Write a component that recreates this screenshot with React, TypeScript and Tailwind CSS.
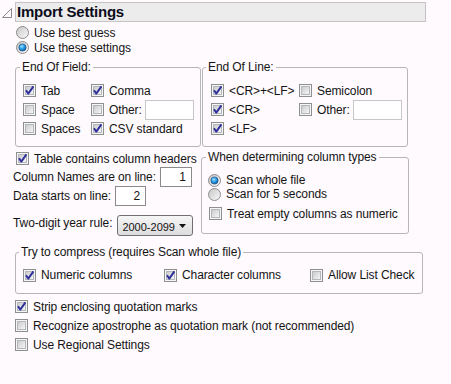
import React from "react";

const CheckBox = ({ on }: { on?: boolean }) => (
  <svg width="13" height="13" viewBox="0 0 13 13" className="shrink-0">
    <defs>
      <linearGradient id="cb-fill" x1="0" y1="0" x2="1" y2="1">
        <stop offset="0" stopColor="#c9c9c9" />
        <stop offset="1" stopColor="#f8f8f8" />
      </linearGradient>
    </defs>
    <rect x="0.5" y="0.5" width="12" height="12" fill="#f5f5f5" stroke="#8e8f8f" />
    <rect x="2.5" y="2.5" width="8" height="8" fill="url(#cb-fill)" stroke="#b4b7bb" />
    {on && (
      <path
        d="M3 6.2 L5.3 9.6 L10.4 2.4"
        fill="none"
        stroke="#2e2e9c"
        strokeWidth="1.9"
        strokeLinejoin="round"
      />
    )}
  </svg>
);

const Radio = ({ on }: { on?: boolean }) => (
  <svg width="13" height="13" viewBox="0 0 13 13" className="shrink-0">
    <defs>
      <linearGradient id="rb-fill" x1="0" y1="0" x2="1" y2="1">
        <stop offset="0" stopColor="#c4c4c4" />
        <stop offset="1" stopColor="#fbfbfb" />
      </linearGradient>
      <radialGradient id="rb-dot" cx="0.4" cy="0.35" r="0.7">
        <stop offset="0" stopColor="#9ee0ff" />
        <stop offset="0.5" stopColor="#2a9ee6" />
        <stop offset="1" stopColor="#0b5aa0" />
      </radialGradient>
    </defs>
    <circle cx="6.5" cy="6.5" r="6" fill="url(#rb-fill)" stroke="#8d8d8d" />
    {on && <circle cx="6.5" cy="6.5" r="3.6" fill="url(#rb-dot)" stroke="#1b4f86" strokeWidth="0.7" />}
  </svg>
);

const Item = ({ on, label, radio }: { on?: boolean; label: string; radio?: boolean }) => (
  <div className="flex items-center gap-[5px] whitespace-nowrap">
    {radio ? <Radio on={on} /> : <CheckBox on={on} />}
    <span>{label}</span>
  </div>
);

const TextBox = ({ value, className }: { value?: string; className: string }) => (
  <div className={`flex h-[20px] items-center justify-end bg-white pr-[5px] ${className}`}>{value}</div>
);

export default function App() {
  return (
    <div className="h-[384px] w-[451px] overflow-hidden bg-[#fefafe] font-['Liberation_Sans',Arial,sans-serif] text-[12px] leading-[14px] tracking-[-0.1px] text-[#141414]">
      {/* title bar */}
      <div className="flex items-center pt-[2px]">
        <svg width="10" height="10" viewBox="0 0 10 10" className="ml-[2px] mr-[3px] mt-[2px]">
          <path d="M9.5 0.5 L9.5 9.5 L0.5 9.5 Z" fill="none" stroke="#8a8a8a" />
        </svg>
        <div className="flex h-[20px] w-[411px] items-center border border-[#c4c4c4] bg-[#ececec] pl-[1px] text-[15px] font-bold tracking-[-0.2px] text-[#0c0c1c]">
          Import Settings
        </div>
      </div>

      <div className="pl-[16px] pt-[3px]">
        <div className="flex h-[15px] items-center">
          <Item radio label="Use best guess" />
        </div>
        <div className="flex h-[15px] items-center">
          <Item radio on label="Use these settings" />
        </div>
      </div>

      {/* End of field / End of line */}
      <div className="ml-[15px] mt-[5px] flex gap-[1px]">
        <fieldset className="w-[186px] rounded-[3px] border border-[#b6b6b6] pb-[8px] pl-[7px]">
          <legend className="-ml-[3px] px-[2px] leading-[14px]">End Of Field:</legend>
          <div className="flex pt-[7px]">
            <div className="flex w-[68px] flex-col">
              <div className="flex h-[19px] items-center"><Item on label="Tab" /></div>
              <div className="flex h-[19px] items-center"><Item label="Space" /></div>
              <div className="flex h-[19px] items-center"><Item label="Spaces" /></div>
            </div>
            <div className="flex flex-col">
              <div className="flex h-[19px] items-center"><Item on label="Comma" /></div>
              <div className="flex h-[19px] items-center gap-[3px]">
                <Item label="Other:" />
                <TextBox className="w-[49px] border border-[#c6c6c6]" />
              </div>
              <div className="flex h-[19px] items-center"><Item on label="CSV standard" /></div>
            </div>
          </div>
        </fieldset>

        <fieldset className="w-[206px] rounded-[3px] border border-[#b6b6b6] pb-[8px] pl-[8px]">
          <legend className="-ml-[5px] px-[2px] leading-[14px]">End Of Line:</legend>
          <div className="flex pt-[7px]">
            <div className="flex w-[88px] flex-col">
              <div className="flex h-[19px] items-center"><Item on label="<CR>+<LF>" /></div>
              <div className="flex h-[19px] items-center"><Item on label="<CR>" /></div>
              <div className="flex h-[19px] items-center"><Item on label="<LF>" /></div>
            </div>
            <div className="flex flex-col">
              <div className="flex h-[19px] items-center"><Item label="Semicolon" /></div>
              <div className="flex h-[19px] items-center gap-[3px]">
                <Item label="Other:" />
                <TextBox className="w-[49px] border border-[#c6c6c6]" />
              </div>
            </div>
          </div>
        </fieldset>
      </div>

      {/* headers + column types */}
      <div className="mt-[3px] flex">
        <div className="w-[201px] pl-[13px]">
          <div className="flex h-[17px] items-center pl-[3px]">
            <Item on label="Table contains column headers" />
          </div>
          <div className="flex h-[19px] items-center gap-[4px]">
            <span>Column Names are on line:</span>
            <TextBox value="1" className="h-[19px] w-[32px] border border-[#8a8a8a]" />
          </div>
          <div className="flex h-[19px] items-center gap-[4px]">
            <span>Data starts on line:</span>
            <TextBox value="2" className="h-[19px] w-[31px] border border-[#8a8a8a]" />
          </div>
          <div className="mt-[10px] flex h-[21px] items-start gap-[5px]">
            <span className="pt-[1px]">Two-digit year rule:</span>
            <div className="flex h-[21px] w-[76px] items-center justify-between whitespace-nowrap rounded-[3px] border border-[#707070] bg-linear-to-b from-[#f6f6f6] to-[#dcdcdc] pl-[4px] pr-[6px] text-[11px] tracking-normal">
              <span className="pt-[2px]">2000-2099</span>
              <svg width="7" height="4" viewBox="0 0 7 4">
                <path d="M0 0 L7 0 L3.5 4 Z" fill="#111" />
              </svg>
            </div>
          </div>
        </div>

        <fieldset className="h-fit w-[208px] rounded-[3px] border border-[#b6b6b6] pb-[10px] pl-[6px]">
          <legend className="-ml-[2px] px-[2px] leading-[14px]">When determining column types</legend>
          <div className="pt-[9px]">
            <div className="flex h-[14px] items-center"><Item radio on label="Scan whole file" /></div>
            <div className="flex h-[14px] items-center"><Item radio label="Scan for 5 seconds" /></div>
            <div className="mt-[3px] flex h-[19px] items-center pl-[1px]">
              <Item label="Treat empty columns as numeric" />
            </div>
          </div>
        </fieldset>
      </div>

      {/* compress */}
      <fieldset className="ml-[15px] mt-[9px] w-[408px] rounded-[3px] border border-[#b6b6b6] pb-[9px] pl-[7px]">
        <legend className="-ml-[4px] px-[2px] leading-[14px]">
          Try to compress (requires Scan whole file)
        </legend>
        <div className="mt-[7px] flex h-[18px] items-center">
          <div className="w-[141px]"><Item on label="Numeric columns" /></div>
          <div className="w-[146px]"><Item on label="Character columns" /></div>
          <Item label="Allow List Check" />
        </div>
      </fieldset>

      <div className="mt-[3px] pl-[15px]">
        <div className="flex h-[19px] items-center"><Item on label="Strip enclosing quotation marks" /></div>
        <div className="flex h-[19px] items-center">
          <Item label="Recognize apostrophe as quotation mark (not recommended)" />
        </div>
        <div className="flex h-[19px] items-center"><Item label="Use Regional Settings" /></div>
      </div>
    </div>
  );
}
